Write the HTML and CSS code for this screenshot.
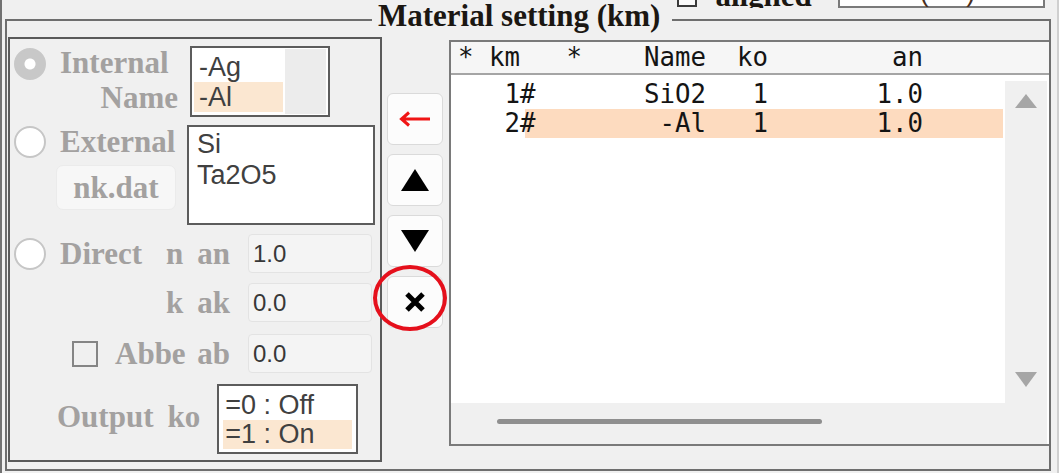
FILE: index.html
```html
<!DOCTYPE html>
<html>
<head>
<meta charset="utf-8">
<link rel="stylesheet" href="styles.css">
</head>
<body>
<div class="window">
  <div class="frame">
    <div class="frame-top">
      <span class="rule rule-left"></span>
      <span class="frame-title">Material setting (km)</span>
      <div class="top-right">
        <div class="cutoff">
          <span class="cb-dark"></span>
          <span class="aligned">aligned</span>
          <span class="textfield">(&nbsp;&nbsp;&nbsp;&nbsp;&nbsp;)</span>
        </div>
        <span class="rule"></span>
      </div>
    </div>
    <div class="frame-body">
      <section class="left-box">
        <div class="row-a">
          <span class="radio radio-on"></span>
          <div class="lbl lbl-two"><span>Internal</span><span class="right">Name</span></div>
          <div class="listbox lb-internal">
            <div class="lb-items">
              <div class="item">-Ag</div>
              <div class="item sel">-Al</div>
            </div>
            <div class="lb-scroll"></div>
          </div>
        </div>
        <div class="row-b">
          <div class="ext-col">
            <div class="ext-line">
              <span class="radio radio-b"></span>
              <span class="lbl lbl-ext">External</span>
            </div>
            <div class="lbl nk-btn">nk.dat</div>
          </div>
          <div class="listbox lb-external">
            <div>Si</div>
            <div>Ta2O5</div>
          </div>
        </div>
        <div class="prow row-c">
          <div class="lead">
            <span class="radio radio-c"></span>
            <span class="lbl lbl-lead">Direct</span>
          </div>
          <div class="sub lbl"><span>n</span><span>an</span></div>
          <div class="field">1.0</div>
        </div>
        <div class="prow row-d">
          <div class="lead"></div>
          <div class="sub lbl"><span>k</span><span>ak</span></div>
          <div class="field">0.0</div>
        </div>
        <div class="prow row-e">
          <div class="lead">
            <span class="check"></span>
            <span class="lbl lbl-abbe">Abbe</span>
          </div>
          <div class="sub lbl"><span>ab</span></div>
          <div class="field">0.0</div>
        </div>
        <div class="row-f">
          <span class="lbl lbl-output">Output</span>
          <span class="lbl lbl-ko">ko</span>
          <div class="listbox lb-output">
            <div class="item">=0 : Off</div>
            <div class="item sel">=1 : On</div>
          </div>
        </div>
      </section>

      <div class="mid">
        <div class="btn">
          <svg width="32" height="16" viewBox="0 0 32 16"><path d="M31 8H3M10 1.5L2.5 8L10 14.5" fill="none" stroke="#f01515" stroke-width="3"/></svg>
        </div>
        <div class="btn">
          <svg width="28" height="22" viewBox="0 0 28 22"><polygon points="14,0 28,22 0,22" fill="#000"/></svg>
        </div>
        <div class="btn">
          <svg width="28" height="22" viewBox="0 0 28 22"><polygon points="0,0 28,0 14,22" fill="#000"/></svg>
        </div>
        <div class="btn">
          <svg width="22" height="22" viewBox="0 0 22 22"><path d="M3 3L19 19M19 3L3 19" stroke="#000" stroke-width="5"/></svg>
        </div>
        <span class="annot"></span>
      </div>

      <div class="list">
        <div class="list-head mono">* km   *    Name  ko        an</div>
        <div class="list-body">
          <div class="rows mono">
            <div class="row">   1#       SiO2   1       1.0</div>
            <div class="row sel-row">   2#        -Al   1       1.0</div>
          </div>
          <div class="vscroll">
            <svg width="22" height="14" viewBox="0 0 22 14"><polygon points="11,0 22,14 0,14" fill="#a6a6a6"/></svg>
            <svg width="22" height="15" viewBox="0 0 22 15"><polygon points="0,0 22,0 11,15" fill="#a6a6a6"/></svg>
          </div>
          <div class="hscroll"><span class="thumb"></span></div>
        </div>
      </div>
    </div>
  </div>
</div>
</body>
</html>
```

FILE: styles.css
```css
html, body {
  margin: 0;
  padding: 0;
}
body {
  background: #f0f0f0;
  width: 1059px;
  height: 473px;
  overflow: hidden;
  font-family: "Liberation Serif", serif;
}
.window {
  display: flex;
  height: 473px;
  box-sizing: border-box;
  border-left: 2px solid #727272;
  border-right: 2px solid #cfcfcf;
}
.frame {
  margin-left: 3px;
  width: 1046px;
  height: 471px;
  display: flex;
  flex-direction: column;
}
.frame-top {
  height: 21px;
  display: flex;
  flex: none;
}
.rule {
  display: block;
  height: 2px;
  background: #6e6e6e;
}
.rule-left {
  width: 367px;
  align-self: flex-end;
  flex: none;
}
.frame-title {
  align-self: flex-start;
  margin: 0 12px 0 6px;
  font: bold 31px/31px "Liberation Serif", serif;
  color: #1b1712;
  white-space: nowrap;
  flex: none;
}
.top-right {
  flex: 1;
  display: flex;
  flex-direction: column;
  justify-content: space-between;
}
.cutoff {
  height: 8px;
  overflow: hidden;
  display: flex;
  align-items: flex-end;
}
.cb-dark {
  flex: none;
  width: 20px;
  height: 20px;
  box-sizing: border-box;
  border: 2px solid #3a3a3a;
  background: #fafafa;
  margin: 0 0 1px 5px;
}
.aligned {
  flex: none;
  margin: 0 0 -3px 18px;
  font: bold 31px/31px "Liberation Serif", serif;
  color: #1b1712;
}
.textfield {
  flex: none;
  margin-left: 26px;
  width: 207px;
  height: 30px;
  box-sizing: border-box;
  border: 2px solid #7a7a7a;
  background: #fff;
  padding-left: 80px;
  font: 27px/24px "Liberation Sans", sans-serif;
  color: #4a3020;
  white-space: nowrap;
}
.frame-body {
  flex: 1;
  display: flex;
  border: 2px solid #6e6e6e;
  border-top: none;
}

/* left box */
.left-box {
  flex: none;
  margin: 16px 0 0 1px;
  width: 374px;
  height: 425px;
  box-sizing: border-box;
  border: 2px solid #5a5a5a;
  display: flex;
  flex-direction: column;
}
.lbl {
  font: bold 31px/35px "Liberation Serif", serif;
  color: #a3a1a0;
  white-space: nowrap;
}
.radio {
  flex: none;
  display: block;
  width: 32px;
  height: 32px;
  box-sizing: border-box;
  border-radius: 50%;
  border: 2px solid #c6c6c6;
  background: #fff;
}
.radio-on {
  border-color: #c8c8c8;
  background: radial-gradient(circle, #fff 0 5px, #c8c8c8 6px);
}
.row-a {
  display: flex;
  align-items: flex-start;
  margin-top: 6px;
}
.row-a .radio {
  margin: 3px 0 0 4px;
}
.lbl-two {
  margin-left: 14px;
  width: 118px;
  display: flex;
  flex-direction: column;
}
.lbl-two .right {
  align-self: flex-end;
}
.listbox {
  flex: none;
  box-sizing: border-box;
  border: 2px solid #5c5c5c;
  background: #fff;
  font: 27px "Liberation Sans", sans-serif;
  color: #404040;
  white-space: nowrap;
}
.lb-internal {
  margin: 1px 0 0 12px;
  width: 140px;
  height: 71px;
  display: flex;
  padding: 1px 2px;
}
.lb-items {
  width: 89px;
  padding-top: 3px;
}
.lb-internal .item {
  height: 30px;
  line-height: 30px;
  padding-left: 5px;
}
.sel {
  background: #fbe7d1;
}
.lb-scroll {
  margin-left: 2px;
  width: 41px;
  background: #ececec;
}
.row-b {
  display: flex;
  align-items: flex-start;
  margin-top: 7px;
}
.ext-col {
  width: 177px;
  flex: none;
  display: flex;
  flex-direction: column;
}
.ext-line {
  display: flex;
  align-items: flex-start;
}
.radio-b {
  margin: 2px 0 0 4px;
}
.lbl-ext {
  margin-left: 14px;
}
.nk-btn {
  margin: 6px 0 0 46px;
  width: 120px;
  height: 45px;
  box-sizing: border-box;
  background: #f7f7f7;
  border: 1px solid #ebebeb;
  border-radius: 7px;
  text-align: center;
  line-height: 43px;
}
.lb-external {
  margin-top: 1px;
  width: 188px;
  height: 100px;
  padding: 2px 0 0 8px;
  line-height: 31px;
}
.prow {
  display: flex;
  align-items: center;
  height: 39px;
}
.row-c { margin-top: 9px; }
.row-d { margin-top: 10px; }
.row-e { margin-top: 12px; }
.lead {
  width: 150px;
  flex: none;
  display: flex;
  align-items: center;
}
.radio-c {
  margin-left: 4px;
}
.lbl-lead {
  margin-left: 14px;
}
.check {
  flex: none;
  width: 26px;
  height: 26px;
  box-sizing: border-box;
  border: 2px solid #858585;
  margin-left: 62px;
}
.lbl-abbe {
  margin-left: 17px;
}
.sub {
  width: 70px;
  flex: none;
  display: flex;
  justify-content: flex-end;
  gap: 14px;
}
.field {
  flex: none;
  margin-left: 18px;
  width: 124px;
  height: 39px;
  box-sizing: border-box;
  background: #f4f4f4;
  border: 1px solid #e3e3e3;
  border-radius: 4px;
  padding-left: 4px;
  font: 24px/37px "Liberation Sans", sans-serif;
  color: #383838;
}
.row-f {
  display: flex;
  align-items: flex-start;
  margin-top: 11px;
}
.lbl-output {
  margin: 15px 0 0 47px;
}
.lbl-ko {
  margin: 15px 0 0 14px;
}
.lb-output {
  margin-left: 17px;
  width: 141px;
  height: 70px;
  padding: 5px 4px 0;
  line-height: 29px;
}
.lb-output .item {
  height: 29px;
  padding-left: 2px;
}

/* middle buttons */
.mid {
  position: relative;
  flex: none;
  width: 67px;
  box-sizing: border-box;
  padding-top: 72px;
  display: flex;
  flex-direction: column;
  gap: 9px;
}
.btn {
  margin-left: 5px;
  width: 56px;
  height: 52px;
  box-sizing: border-box;
  background: #fcfcfc;
  border: 1px solid #dadada;
  border-radius: 6px;
  display: flex;
  align-items: center;
  justify-content: center;
}
.annot {
  position: absolute;
  left: -9px;
  top: 244px;
  width: 74px;
  height: 66px;
  box-sizing: border-box;
  border: 4px solid #e5101c;
  border-radius: 50%;
}

/* list */
.list {
  flex: 1;
  margin-top: 19px;
  height: 406px;
  box-sizing: border-box;
  border: 2px solid #7a7a7a;
  border-right: none;
  background: #fff;
  display: flex;
  flex-direction: column;
}
.mono {
  font: 25.75px "DejaVu Sans Mono", monospace;
  color: #141414;
}
.list-head {
  height: 31px;
  line-height: 31px;
  padding-left: 7px;
  background: #f6f6f6;
  border-bottom: 2px solid #a5a5a5;
  flex: none;
  white-space: pre;
}
.list-body {
  flex: 1;
  display: grid;
  grid-template-columns: 554px 42px;
  grid-template-rows: 1fr 41px;
}
.rows {
  padding: 5px 0 0 7px;
}
.row {
  width: 545px;
  height: 29px;
  line-height: 29px;
  white-space: pre;
}
.sel-row {
  background: linear-gradient(90deg, transparent 67px, #fddbbf 67px);
}
.vscroll {
  margin-top: 6px;
  background: #f0f0f0;
  display: flex;
  flex-direction: column;
  align-items: center;
  justify-content: space-between;
  padding: 13px 0 16px;
}
.hscroll {
  grid-column: 1 / 3;
  background: #f0f0f0;
}
.thumb {
  display: block;
  margin: 16px 0 0 46px;
  width: 325px;
  height: 5px;
  border-radius: 3px;
  background: #8f8f8f;
}
```
